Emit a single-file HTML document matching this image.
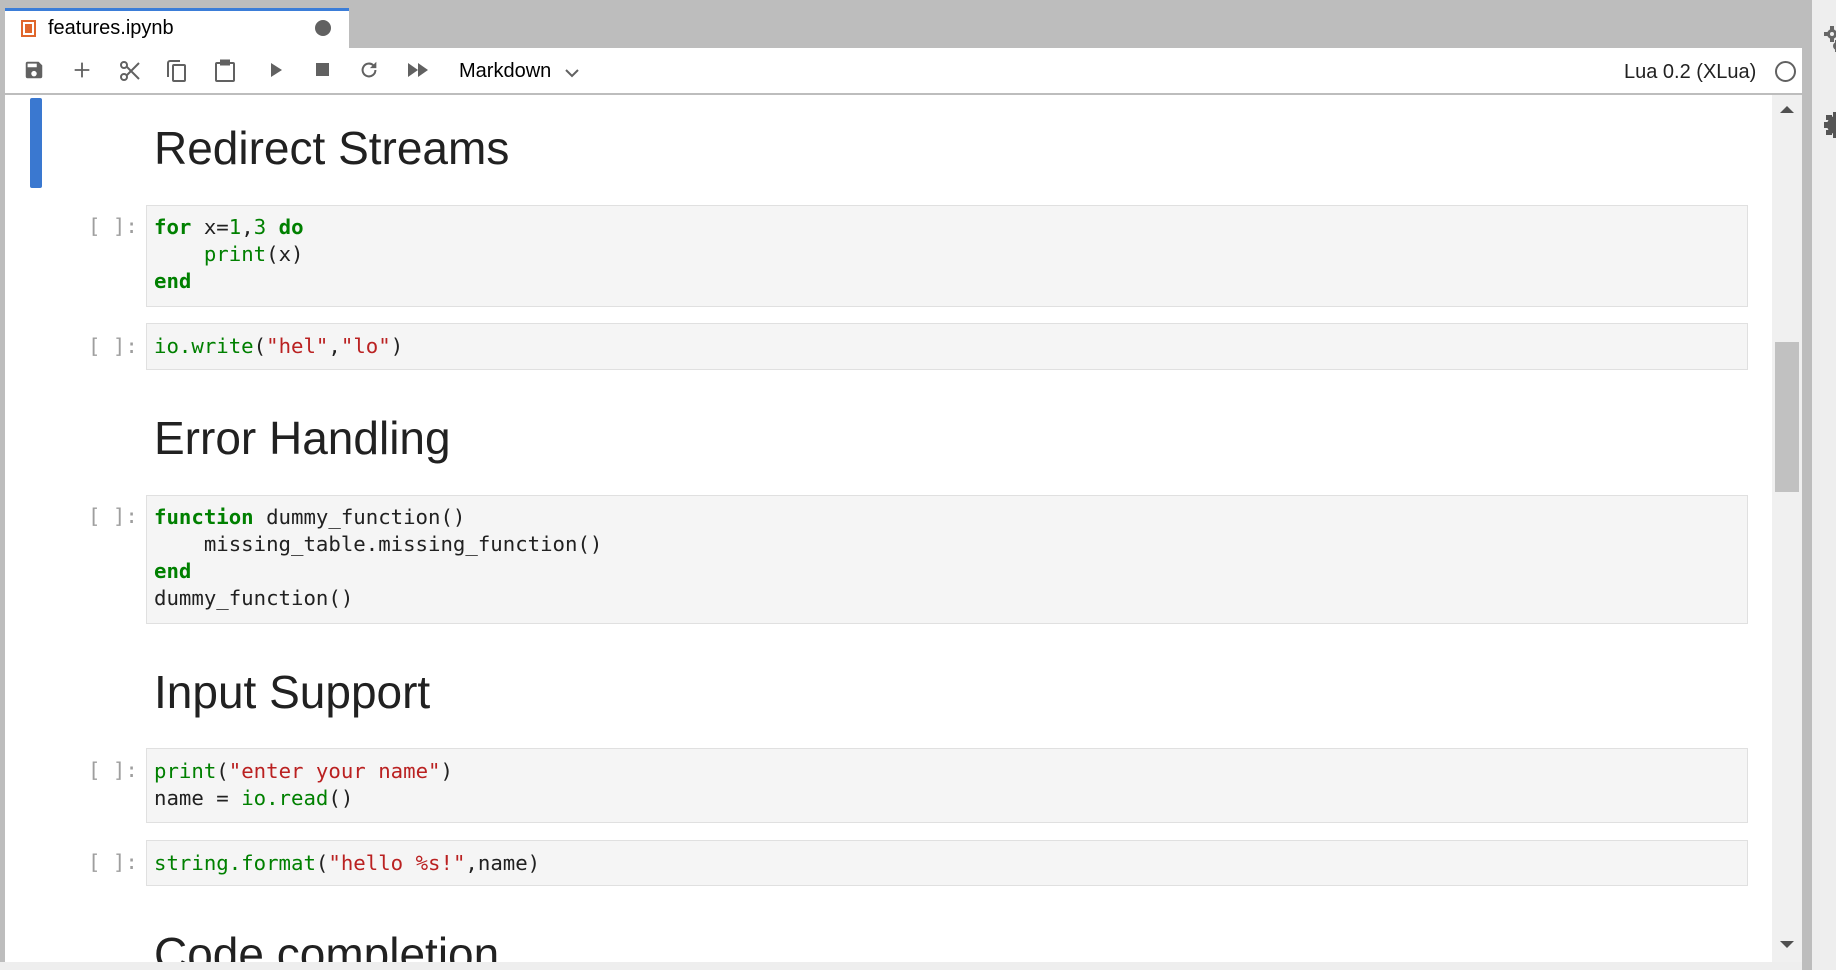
<!DOCTYPE html>
<html><head><meta charset="utf-8"><style>
*{margin:0;padding:0;box-sizing:border-box}
body{width:1836px;height:970px;overflow:hidden;background:#eeeeee;font-family:"Liberation Sans",sans-serif;position:relative}
.abs{position:absolute}
.code{position:absolute;left:146px;width:1602px;background:#f5f5f5;border:1px solid #e0e0e0;font-family:"DejaVu Sans Mono","Liberation Mono",monospace;font-size:20.7px;line-height:27px;padding:8px 7px;color:#212121;white-space:pre}
.pr{position:absolute;left:88px;font-family:"DejaVu Sans Mono","Liberation Mono",monospace;font-size:20.7px;line-height:27px;color:#9e9e9e;white-space:pre}
.k{color:#008000;font-weight:bold}.b{color:#008000}.s{color:#ba2121}.n{color:#008000}
h1{position:absolute;left:154px;font-weight:normal;font-size:46px;color:#212121;line-height:1}
.ic{position:absolute;top:59px}
</style></head><body>
<div class="abs" style="left:0;top:0;width:1802px;height:962px;background:#bdbdbd"></div>
<div class="abs" style="left:1802px;top:0;width:10px;height:970px;background:#bdbdbd"></div>
<!-- tab -->
<div class="abs" style="left:5px;top:8px;width:344px;height:42px;background:#fff;border-top:3px solid #3b7dd8"></div>
<div class="abs" style="left:21px;top:20px;width:15px;height:17px;border:2px solid #e0662b;background:#fff"><div style="position:absolute;left:2px;top:2px;width:7px;height:9px;background:#e0662b"></div></div>
<div class="abs" style="left:48px;top:17px;font-size:20px;color:#000">features.ipynb</div>
<div class="abs" style="left:315px;top:20px;width:16px;height:16px;border-radius:50%;background:#616161"></div>
<!-- toolbar -->
<div class="abs" style="left:5px;top:48px;width:1797px;height:47px;background:#fff;border-bottom:2px solid #bdbdbd"></div>
<svg class="ic" style="left:23px" width="22" height="22" viewBox="0 0 24 24"><path fill="#616161" d="M17 3H5a2 2 0 0 0-2 2v14a2 2 0 0 0 2 2h14a2 2 0 0 0 2-2V7l-4-4zm-5 16a3 3 0 1 1 0-6 3 3 0 0 1 0 6zm3-10H5V5h10v4z"/></svg>
<svg class="ic" style="left:71px" width="22" height="22" viewBox="0 0 24 24"><path stroke="#616161" stroke-width="2" d="M12 4v16M4 12h16"/></svg>
<svg class="ic" style="left:118px" width="24" height="24" viewBox="0 0 24 24"><g stroke="#616161" stroke-width="2" fill="none"><circle cx="6" cy="6" r="3"/><circle cx="6" cy="18" r="3"/><path d="M8.5 7.5L21 20M8.5 16.5L21 4"/></g></svg>
<svg class="ic" style="left:166px" width="22" height="24" viewBox="0 0 22 24"><g stroke="#616161" stroke-width="2" fill="none"><path d="M14 2H4a2 2 0 0 0-2 2v14"/><rect x="7" y="6" width="12" height="16" rx="1"/></g></svg>
<svg class="ic" style="left:214px" width="22" height="24" viewBox="0 0 22 24"><g stroke="#616161" stroke-width="2" fill="none"><rect x="2" y="4" width="18" height="18" rx="1"/><rect x="7" y="1.5" width="8" height="4" fill="#616161"/></g></svg>
<svg class="ic" style="left:266px" width="20" height="22" viewBox="0 0 20 22"><path fill="#616161" d="M5 4l11 7-11 7z"/></svg>
<svg class="ic" style="left:313px" width="20" height="22" viewBox="0 0 20 22"><rect x="3" y="4" width="13" height="13" fill="#616161"/></svg>
<svg class="ic" style="left:358px" width="22" height="22" viewBox="0 0 24 24"><path fill="none" stroke="#616161" stroke-width="2.2" d="M19 12a7 7 0 1 1-2.1-5"/><path fill="#616161" d="M20 3v7h-7z"/></svg>
<svg class="ic" style="left:406px" width="24" height="22" viewBox="0 0 24 22"><path fill="#616161" d="M2 4l10 7-10 7zM12 4l10 7-10 7z"/></svg>
<div class="abs" style="left:459px;top:60px;font-size:20px;color:#000">Markdown</div>
<svg class="abs" style="left:564px;top:67px" width="16" height="12" viewBox="0 0 16 12"><path d="M2 3l6 6 6-6" stroke="#616161" stroke-width="2" fill="none"/></svg>
<div class="abs" style="left:1624px;top:61px;font-size:20px;color:#212121">Lua 0.2 (XLua)</div>
<div class="abs" style="left:1775px;top:61px;width:21px;height:21px;border-radius:50%;border:2px solid #616161"></div>
<!-- main -->
<div class="abs" style="left:5px;top:95px;width:1767px;height:867px;background:#fff"></div>
<div class="abs" style="left:1772px;top:95px;width:30px;height:867px;background:#f0f0f0"></div>
<div class="abs" style="left:1775px;top:342px;width:24px;height:150px;background:#c1c1c1"></div>
<svg class="abs" style="left:1779px;top:104px" width="16" height="10"><path d="M1 9l7-7 7 7z" fill="#505050"/></svg>
<svg class="abs" style="left:1779px;top:940px" width="16" height="10"><path d="M1 1l7 7 7-7z" fill="#505050"/></svg>
<svg class="abs" style="left:1824px;top:26px" width="12" height="28" viewBox="0 0 12 28"><g fill="#666"><circle cx="8" cy="8" r="5"/><rect x="6" y="0" width="4" height="16"/><rect x="0" y="6" width="16" height="4"/><circle cx="13" cy="20" r="4"/><rect x="11" y="14" width="4" height="12"/></g><circle cx="8" cy="8" r="2" fill="#eee"/></svg>
<svg class="abs" style="left:1822px;top:112px" width="14" height="26" viewBox="0 0 14 26"><g fill="#555"><circle cx="14" cy="13" r="9"/><rect x="2" y="10" width="6" height="6"/><rect x="4" y="3" width="6" height="5"/><rect x="4" y="18" width="6" height="5"/><rect x="11" y="0" width="6" height="5"/><rect x="11" y="21" width="6" height="5"/></g></svg>
<div class="abs" style="left:30px;top:98px;width:12px;height:90px;background:#3a78d0;border-radius:2px"></div>

<h1 style="top:125px">Redirect Streams</h1>
<div class="pr" style="top:213px">[ ]:</div>
<div class="code" style="top:205px;height:102px"><span class="k">for</span> x=<span class="n">1</span>,<span class="n">3</span> <span class="k">do</span>
    <span class="b">print</span>(x)
<span class="k">end</span></div>
<div class="pr" style="top:333px">[ ]:</div>
<div class="code" style="top:323px;height:47px;padding-top:9px"><span class="b">io.write</span>(<span class="s">"hel"</span>,<span class="s">"lo"</span>)</div>

<h1 style="top:415px">Error Handling</h1>
<div class="pr" style="top:503px">[ ]:</div>
<div class="code" style="top:495px;height:129px"><span class="k">function</span> dummy_function()
    missing_table.missing_function()
<span class="k">end</span>
dummy_function()</div>

<h1 style="top:669px">Input Support</h1>
<div class="pr" style="top:757px">[ ]:</div>
<div class="code" style="top:748px;height:75px;padding-top:9px"><span class="b">print</span>(<span class="s">"enter your name"</span>)
name = <span class="b">io.read</span>()</div>
<div class="pr" style="top:849px">[ ]:</div>
<div class="code" style="top:840px;height:46px;padding-top:9px"><span class="b">string.format</span>(<span class="s">"hello %s!"</span>,name)</div>

<div class="abs" style="left:5px;top:920px;width:1767px;height:42px;overflow:hidden"><h1 style="top:11px;left:149px">Code completion</h1></div>
</body></html>
